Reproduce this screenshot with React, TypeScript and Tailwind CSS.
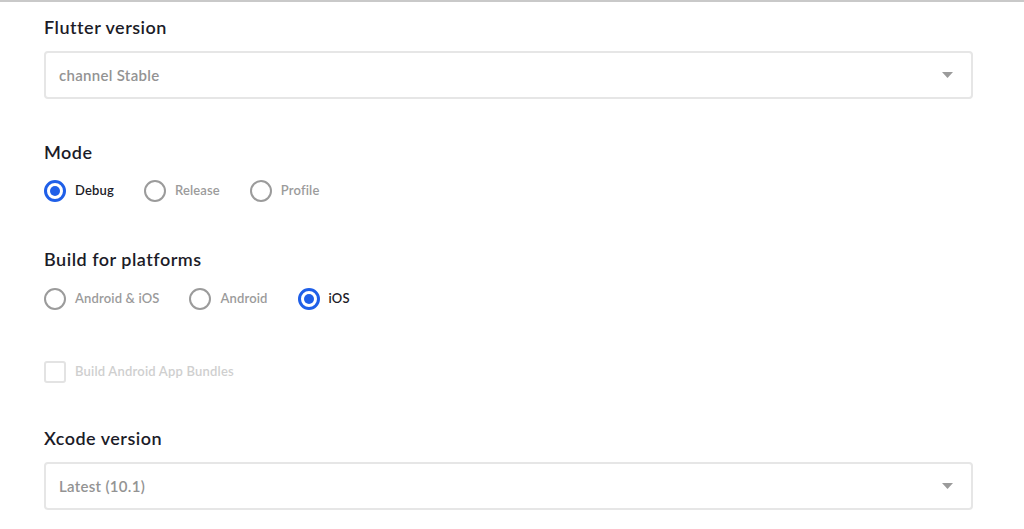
import React from 'react';

const Radio = ({ label, checked }: { label: string; checked?: boolean }) => (
  <label className="flex items-center gap-[9px]">
    {checked ? (
      <span className="w-[22px] h-[22px] rounded-full border-[3px] border-[#1f5fe8] flex items-center justify-center">
        <span className="w-[10px] h-[10px] rounded-full bg-[#1f5fe8]" />
      </span>
    ) : (
      <span className="w-[22px] h-[22px] rounded-full border-2 border-[#9b9b9b]" />
    )}
    <span className={`text-[13px] tracking-[0.15px] font-semibold ${checked ? 'text-[#1c1c28]' : 'text-[#9b9b9b]'}`}>{label}</span>
  </label>
);

const Select = ({ value }: { value: string }) => (
  <div className="h-[48px] border-2 border-[#e6e6e6] rounded-[4px] flex items-center justify-between pl-[13px] pr-[18px]">
    <span className="text-[15px] tracking-[0.3px] font-semibold text-[#939393]">{value}</span>
    <svg width="11" height="6" viewBox="0 0 11 6">
      <path d="M0 0 H11 L5.5 6 Z" fill="#9b9b9b" />
    </svg>
  </div>
);

const Heading = ({ children }: { children: React.ReactNode }) => (
  <h2 className="text-[18px] leading-[24px] tracking-[0.5px] font-semibold text-[#1c1c28]">{children}</h2>
);

export default function App() {
  return (
    <div className="w-[1024px] h-[529px] bg-white border-t-2 border-[#c9c9c9] overflow-hidden" style={{ fontFamily: 'Lato, "Noto Sans", sans-serif' }}>
      <div className="pl-[44px] pr-[51px] pt-[13px]">
        <Heading>Flutter version</Heading>
        <div className="mt-[12px]">
          <Select value="channel Stable" />
        </div>

        <div className="mt-[41px]">
          <Heading>Mode</Heading>
        </div>
        <div className="mt-[16px] flex gap-[30px]">
          <Radio label="Debug" checked />
          <Radio label="Release" />
          <Radio label="Profile" />
        </div>

        <div className="mt-[45px]">
          <Heading>Build for platforms</Heading>
        </div>
        <div className="mt-[17px] flex gap-[30px]">
          <Radio label="Android & iOS" />
          <Radio label="Android" />
          <Radio label="iOS" checked />
        </div>

        <label className="mt-[51px] flex items-center gap-[9px]">
          <span className="w-[22px] h-[22px] rounded-[3px] border-2 border-[#e3e3e3]" />
          <span className="text-[13px] tracking-[0.2px] font-semibold text-[#cfcfcf]">Build Android App Bundles</span>
        </label>

        <div className="mt-[43px]">
          <Heading>Xcode version</Heading>
        </div>
        <div className="mt-[12px]">
          <Select value="Latest (10.1)" />
        </div>
      </div>
    </div>
  );
}
